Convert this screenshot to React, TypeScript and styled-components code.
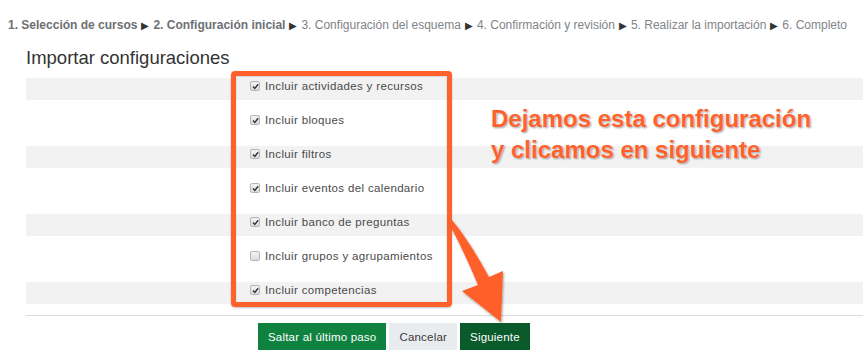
import React from 'react'
import styled, { createGlobalStyle } from 'styled-components'

const GlobalStyle = createGlobalStyle`
  html, body {
    margin: 0;
    padding: 0;
    background: #fff;
    overflow: hidden;
  }
  body {
    font-family: 'Liberation Sans', Arial, sans-serif;
  }
`

const steps = [
  { label: '1. Selección de cursos', done: true },
  { label: '2. Configuración inicial', done: true },
  { label: '3. Configuración del esquema', done: false },
  { label: '4. Confirmación y revisión', done: false },
  { label: '5. Realizar la importación', done: false },
  { label: '6. Completo', done: false },
]

const options = [
  { label: 'Incluir actividades y recursos', checked: true },
  { label: 'Incluir bloques', checked: true },
  { label: 'Incluir filtros', checked: true },
  { label: 'Incluir eventos del calendario', checked: true },
  { label: 'Incluir banco de preguntas', checked: true },
  { label: 'Incluir grupos y agrupamientos', checked: false },
  { label: 'Incluir competencias', checked: true },
]

const Page = styled.div`
  position: relative;
  width: 863px;
  height: 363px;
  overflow: hidden;
`

const Breadcrumb = styled.div`
  display: flex;
  align-items: center;
  gap: 4px;
  padding: 18px 0 0 8px;
  height: 14px;
  font-size: 12px;
  color: #7a7f85;
  white-space: nowrap;
`

const Step = styled.span<{ $done: boolean }>`
  font-weight: ${(p) => (p.$done ? 700 : 400)};
  color: ${(p) => (p.$done ? '#6c7075' : '#7f8489')};
`

const Sep = styled.span`
  color: #333;
  font-size: 10px;
`

const Section = styled.section`
  margin-left: 26px;
`

const Title = styled.h2`
  margin: 15px 0 9px 0;
  font-size: 18.5px;
  font-weight: 400;
  color: #333;
  line-height: 22px;
`

const Item = styled.div<{ $striped: boolean }>`
  box-sizing: border-box;
  display: flex;
  align-items: center;
  gap: 5px;
  height: 22px;
  margin-bottom: 12px;
  padding: 0 0 6px 224px;
  background: ${(p) => (p.$striped ? '#f2f2f2' : 'transparent')};
  font-size: 11.5px;
  color: #4a4a4a;
  letter-spacing: 0.35px;
`

const Box = styled.span`
  display: inline-flex;
  align-items: center;
  justify-content: center;
  width: 8px;
  height: 8px;
  border: 1px solid #b5b5b5;
  border-radius: 2px;
  background: linear-gradient(#f4f4f4, #dcdcdc);
`

const Divider = styled.div`
  margin-top: -1px;
  border-top: 1px solid #dcdcdc;
`

const Actions = styled.div`
  display: flex;
  gap: 3px;
  padding: 7px 0 0 232px;
`

const Button = styled.button<{ $variant: 'primary' | 'secondary' | 'dark' }>`
  height: 27px;
  padding: 0 10px;
  border: none;
  font-family: 'Liberation Sans', Arial, sans-serif;
  font-size: 11.5px;
  letter-spacing: 0.2px;
  color: ${(p) => (p.$variant === 'secondary' ? '#3a3a3a' : '#fff')};
  background: ${(p) =>
    p.$variant === 'primary' ? '#0f823f' : p.$variant === 'dark' ? '#0b5a2b' : '#e9ecef'};
`

const Highlight = styled.div`
  position: absolute;
  left: 231px;
  top: 71px;
  width: 211px;
  height: 226px;
  border: 5.5px solid #ff612c;
  border-radius: 4px;
  box-shadow: 0 1px 2px rgba(0, 0, 0, 0.25), inset 0 1px 2px rgba(0, 0, 0, 0.2);
`

const Note = styled.div`
  position: absolute;
  left: 491px;
  top: 103px;
  font-family: 'Liberation Sans', Arial, sans-serif;
  font-weight: 700;
  font-size: 24px;
  line-height: 31px;
  color: #ff612c;
  white-space: nowrap;
  text-shadow: 0 0 2px #fff, 1px 1px 2px rgba(0, 0, 0, 0.45);
`

const Arrow = styled.svg`
  position: absolute;
  left: 0;
  top: 0;
  pointer-events: none;
  overflow: visible;
`

const Check = () => (
  <svg width="7" height="7" viewBox="0 0 7 7">
    <path d="M1 3.6 L2.8 5.4 L6.2 1.2" fill="none" stroke="#333" strokeWidth="1.4" />
  </svg>
)

export default function App() {
  return (
    <Page>
      <GlobalStyle />
      <Breadcrumb>
        {steps.map((s, i) => (
          <React.Fragment key={s.label}>
            {i > 0 && <Sep>▶</Sep>}
            <Step $done={s.done}>{s.label}</Step>
          </React.Fragment>
        ))}
      </Breadcrumb>
      <Section>
        <Title>Importar configuraciones</Title>
        {options.map((o, i) => (
          <Item key={o.label} $striped={i % 2 === 0}>
            <Box>{o.checked && <Check />}</Box>
            <span>{o.label}</span>
          </Item>
        ))}
        <Divider />
        <Actions>
          <Button $variant="primary">Saltar al último paso</Button>
          <Button $variant="secondary">Cancelar</Button>
          <Button $variant="dark">Siguiente</Button>
        </Actions>
      </Section>

      <Highlight />
      <Note>
        Dejamos esta configuración
        <br />y clicamos en siguiente
      </Note>
      <Arrow width="863" height="363">
        <defs>
          <filter id="sh" x="-20%" y="-20%" width="140%" height="140%">
            <feDropShadow dx="1" dy="1.5" stdDeviation="1.2" floodColor="#000" floodOpacity="0.35" />
          </filter>
        </defs>
        <path
          d="M452 220 Q470 242 489 277 L503 271 L501 322 L462 291 L478 285 Q466 256 450 225 Z"
          fill="#ff612c"
          filter="url(#sh)"
        />
      </Arrow>
    </Page>
  )
}
